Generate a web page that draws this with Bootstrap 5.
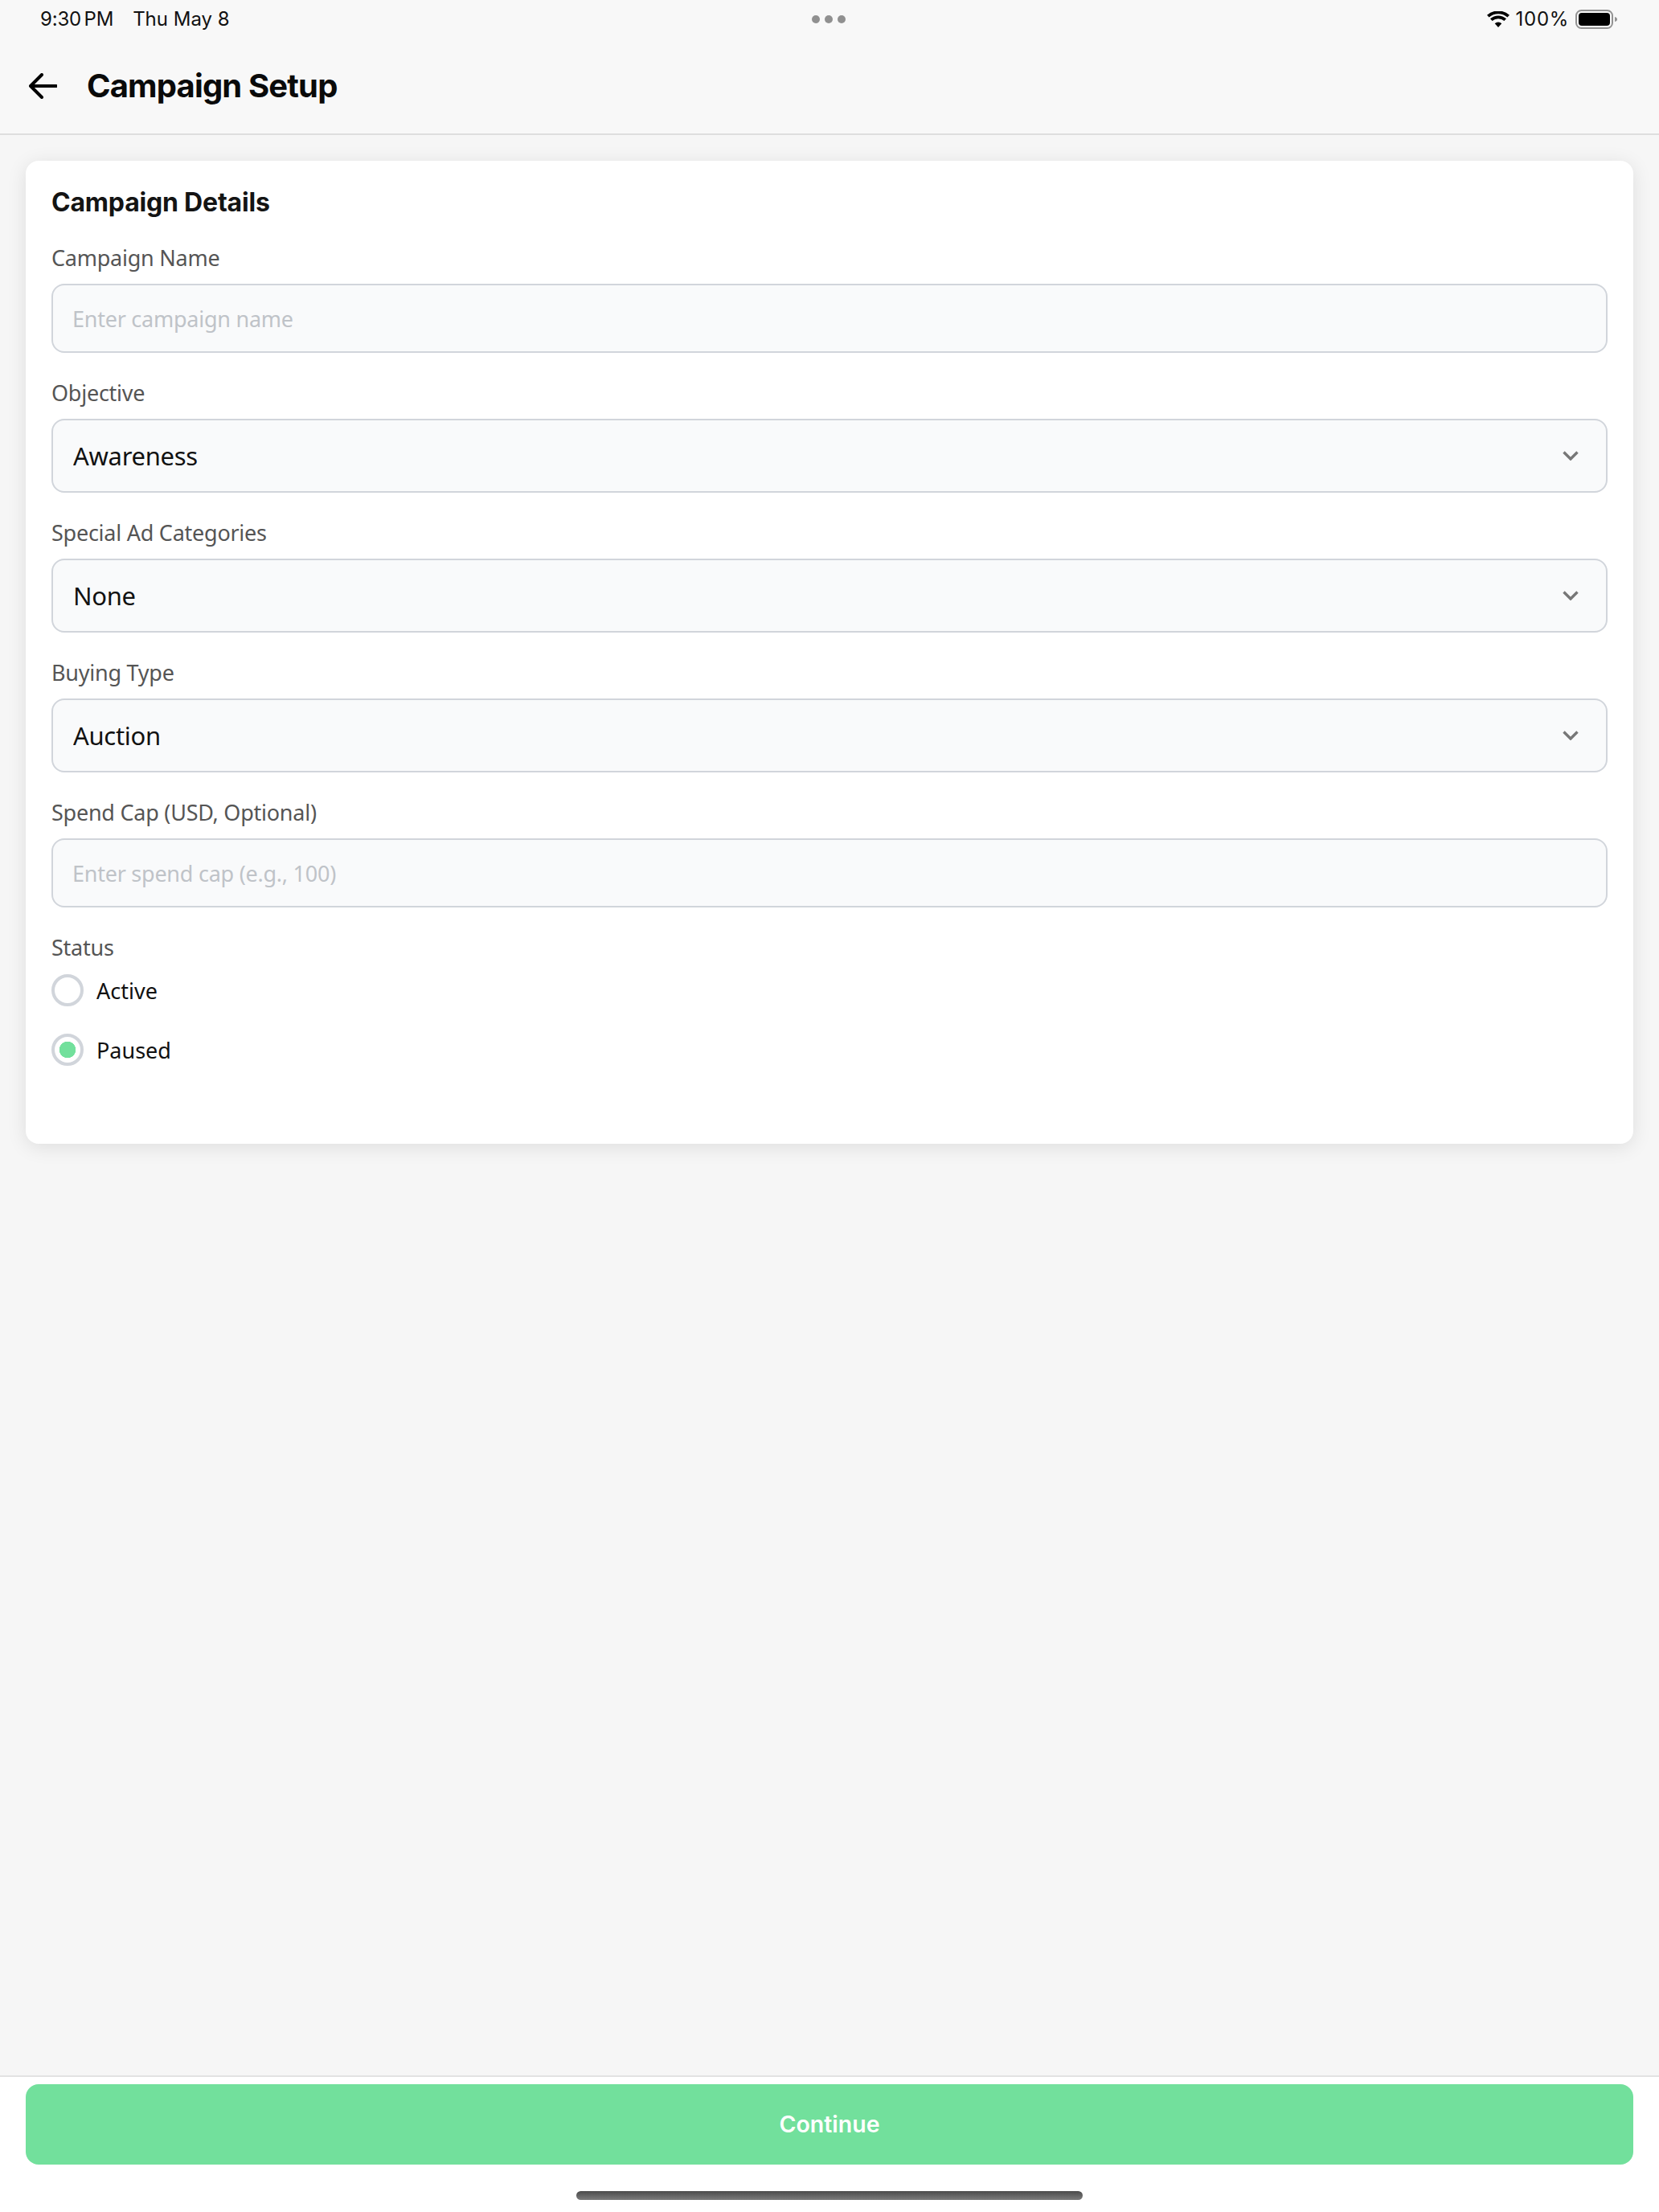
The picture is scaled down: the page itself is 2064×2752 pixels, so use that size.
<!DOCTYPE html>
<html lang="en">
<head>
<meta charset="utf-8">
<title>Campaign Setup</title>
<link rel="stylesheet" href="https://cdn.jsdelivr.net/npm/bootstrap@5.3.0/dist/css/bootstrap.min.css">
<style>
html,body{height:100%}
body{background:#f6f6f6;font-family:"Noto Sans",sans-serif;color:#111}
.app-shell{min-height:2752px}
.top-area{background:#f8f8f8;border-bottom:2px solid #dedede;height:168px}
.status-row{height:48px;padding:0 52px 0 50px;font-family:Inter,sans-serif;font-size:24px;color:#111}
.status-left{width:900px;white-space:nowrap}
.status-time{word-spacing:-3px;letter-spacing:-.2px}
.status-date{margin-left:24px}
.dot-group{gap:6px}
.multi-dot{width:10px;height:10px;border-radius:50%;background:#909090}
.status-right{width:900px}
.status-pct{letter-spacing:.7px}
.header-row{height:118px;padding:0 36px}
.header-title{font-family:Inter,sans-serif;font-weight:700;font-size:40px;letter-spacing:-.85px;color:#0a0a0a;margin:0 0 0 37px}
.main-area{padding:32px 32px 0}
.details-panel{border:0;border-radius:16px;background:#fff;box-shadow:0 4px 24px rgba(0,0,0,.1);padding:32px 32px 64px}
.panel-title{font-family:Inter,sans-serif;font-weight:700;font-size:32px;letter-spacing:-.2px;color:#141414;margin:0 0 29px;line-height:40px}
.field-label{display:block;font-size:27px;letter-spacing:-.25px;line-height:40px;color:#555;margin-bottom:12px}
.field-gap{margin-bottom:30px}
.form-control.text-field,.form-select.pick-field{background-color:#f9fafb;border:2px solid #d1d5db;border-radius:16px;color:#111;box-shadow:none}
.form-control.text-field{height:86px;font-size:27px;letter-spacing:-.25px;padding:0 24px}
.form-control.text-field::placeholder{color:#bfc3c8;opacity:1}
.form-select.pick-field{height:92px;font-size:31px;letter-spacing:-.3px;padding:0 70px 0 25px;background-image:url("data:image/svg+xml,%3Csvg xmlns='http://www.w3.org/2000/svg' viewBox='0 0 20 12'%3E%3Cpath d='M1.500 1.500 10 10l8.500-8.500' fill='none' stroke='%23777' stroke-width='3.400'/%3E%3C/svg%3E");background-size:20px 12px;background-position:right 34px center}
.status-check{display:flex;align-items:center;gap:16px;padding:0;margin:0 0 32px;min-height:40px}
.form-check-input.status-radio{width:40px;height:40px;margin:0;float:none;border:4px solid #d1d5db;background-color:#fff;box-shadow:none}
.form-check-input.status-radio:checked{background-image:radial-gradient(circle,#72e09c 0 10px,#fff 10.5px);background-color:#fff;border-color:#d1d5db}
.status-name{font-size:27px;letter-spacing:0;color:#111;line-height:40px;padding-top:2px}
.bottom-area{background:#fff;border-top:2px solid #e2e2e2;height:170px;padding:9px 32px 0}
.continue-btn{display:block;width:100%;height:100px;border:0;border-radius:16px;background:#72e09c;color:#fff;font-family:Inter,sans-serif;font-weight:600;font-size:28.500px}
.continue-btn:hover,.continue-btn:active{background:#72e09c!important;color:#fff!important}
.home-bar{width:630px;height:11px;border-radius:6px;margin:33px auto 0;background:linear-gradient(#4a4a4a,#7c7c7c)}
</style>
</head>
<body>
<div class="app-shell d-flex flex-column">
  <div class="top-area">
    <div class="status-row d-flex align-items-center justify-content-between">
      <div class="status-left"><span class="status-time">9:30 PM</span><span class="status-date">Thu May 8</span></div>
      <div class="d-flex dot-group justify-content-center"><span class="multi-dot"></span><span class="multi-dot"></span><span class="multi-dot"></span></div>
      <div class="status-right d-flex align-items-center justify-content-end gap-2">
        <svg width="28" height="20" viewBox="0 0 28 20"><path d="M14 20 9.700 15.200a6.400 6.400 0 0 1 8.600 0zM6.600 12 4 9.200a15 15 0 0 1 20 0L21.400 12a11 11 0 0 0-14.800 0zM2.600 7.600 0 4.800a21 21 0 0 1 28 0L25.400 7.600a17 17 0 0 0-22.800 0z" fill="#000"/></svg>
        <span class="status-pct">100%</span>
        <svg width="52" height="24" viewBox="0 0 52 24"><rect x="1" y="1" width="45" height="22" rx="6.500" fill="none" stroke="#929292" stroke-width="2"/><rect x="4" y="4" width="39" height="16" rx="4" fill="#000"/><path d="M49 9c2 .5 3 1.500 3 3s-1 2.500-3 3z" fill="#929292"/></svg>
      </div>
    </div>
    <div class="header-row d-flex align-items-center">
      <svg width="35" height="32" viewBox="0 0 35 32"><path d="M34 16H2M16 2 2 16l14 14" fill="none" stroke="#000" stroke-width="4" stroke-linecap="round" stroke-linejoin="round"/></svg>
      <h1 class="header-title">Campaign Setup</h1>
    </div>
  </div>
  <main class="main-area flex-grow-1">
    <form class="card details-panel">
      <h2 class="panel-title">Campaign Details</h2>
      <div class="field-gap"><label class="field-label" for="f1">Campaign Name</label><input id="f1" class="form-control text-field" placeholder="Enter campaign name"></div>
      <div class="field-gap"><label class="field-label" for="f2">Objective</label><select id="f2" class="form-select pick-field"><option>Awareness</option></select></div>
      <div class="field-gap"><label class="field-label" for="f3">Special Ad Categories</label><select id="f3" class="form-select pick-field"><option>None</option></select></div>
      <div class="field-gap"><label class="field-label" for="f4">Buying Type</label><select id="f4" class="form-select pick-field"><option>Auction</option></select></div>
      <div class="field-gap"><label class="field-label" for="f5">Spend Cap (USD, Optional)</label><input id="f5" class="form-control text-field" placeholder="Enter spend cap (e.g., 100)"></div>
      <div><span class="field-label">Status</span>
        <div class="form-check status-check"><input class="form-check-input status-radio" type="radio" name="st" id="r1"><label class="form-check-label status-name" for="r1">Active</label></div>
        <div class="form-check status-check"><input class="form-check-input status-radio" type="radio" name="st" id="r2" checked><label class="form-check-label status-name" for="r2">Paused</label></div>
      </div>
    </form>
  </main>
  <div class="bottom-area">
    <button type="button" class="btn continue-btn">Continue</button>
    <div class="home-bar"></div>
  </div>
</div>
<script src="https://cdn.jsdelivr.net/npm/bootstrap@5.3.0/dist/js/bootstrap.bundle.min.js"></script>
</body>
</html>
